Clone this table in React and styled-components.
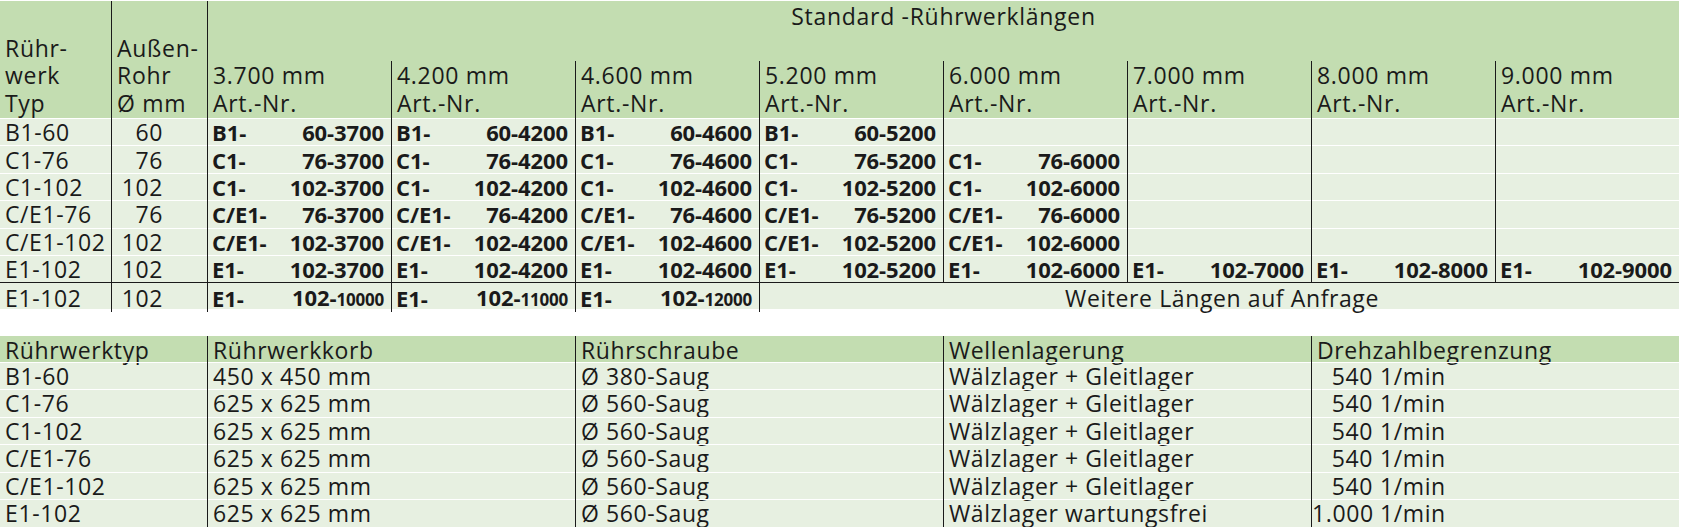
import React from 'react';
import styled, { createGlobalStyle } from 'styled-components';

const HEAD = '#c3ddb1';
const ROW = '#e7f0e1';
const INK = '#1a1a1a';
const TOP_COLS = '111px 96px repeat(8, 184px)';
const SPEC_COLS = '207px repeat(4, 368px)';

const GlobalStyle = createGlobalStyle`
  body {
    margin: 0;
    background: #fff;
    font-family: 'Open Sans', 'Noto Sans', sans-serif;
    color: ${INK};
  }
`;

const Page = styled.div`
  width: 1679px;
  padding-top: 1px;
`;

const HeadGrid = styled.div`
  display: grid;
  grid-template-columns: ${TOP_COLS};
  grid-template-rows: 60px 57px;
  background: ${HEAD};
`;

const HeadCell = styled.div`
  grid-row: ${(p) => p.$row || 'auto'};
  grid-column: ${(p) => p.$col || 'auto'};
  display: flex;
  flex-direction: column;
  justify-content: ${(p) => (p.$top ? 'flex-start' : 'flex-end')};
  align-items: ${(p) => (p.$center ? 'center' : 'flex-start')};
  padding: ${(p) => (p.$top ? '2px 0 0' : '0 0 1px 5px')};
  border-left: ${(p) => (p.$line ? `1px solid ${INK}` : 'none')};
  font-size: 23px;
  line-height: 27.5px;
  letter-spacing: 0.7px;
  white-space: nowrap;
`;

const Row = styled.div`
  display: grid;
  grid-template-columns: ${(p) => p.$cols};
  height: ${(p) => p.$h || '27.4px'};
  background: ${ROW};
  border-top: ${(p) => (p.$ruled ? `1px solid ${INK}` : 'none')};
  box-sizing: border-box;
`;

const Cell = styled.div`
  grid-column: ${(p) => p.$span || 'auto'};
  display: flex;
  align-items: center;
  justify-content: ${(p) => p.$justify || 'flex-start'};
  padding: ${(p) => p.$pad || '2px 0 0 5px'};
  border-left: ${(p) => (p.$line ? `1px solid ${INK}` : 'none')};
  box-shadow: ${(p) => (p.$sep === false ? 'none' : 'inset 0 1px 0 #fff')};
  font-size: 23px;
  line-height: 25px;
  letter-spacing: 0.6px;
  white-space: nowrap;
`;

const ArtCell = styled(Cell)`
  justify-content: space-between;
  padding: 2px 7px 0 4px;
  font-size: 22px;
  font-weight: 700;
  letter-spacing: -0.1px;
`;

const Small = styled.span`
  font-size: 17px;
  letter-spacing: -0.2px;
`;

const Gap = styled.div`
  height: 26.4px;
`;

const SpecHead = styled(Row)`
  background: ${HEAD};
  height: 26px;
`;

const Rpm = styled.span`
  display: inline-block;
  width: 61px;
  text-align: right;
  margin-right: 7px;
`;

const lengths = ['3.700', '4.200', '4.600', '5.200', '6.000', '7.000', '8.000', '9.000'];

const rows = [
  { typ: 'B1-60', d: '60', pre: 'B1-', n: 4 },
  { typ: 'C1-76', d: '76', pre: 'C1-', n: 5 },
  { typ: 'C1-102', d: '102', pre: 'C1-', n: 5 },
  { typ: 'C/E1-76', d: '76', pre: 'C/E1-', n: 5 },
  { typ: 'C/E1-102', d: '102', pre: 'C/E1-', n: 5 },
  { typ: 'E1-102', d: '102', pre: 'E1-', n: 8 },
];

const specs = [
  ['B1-60', '450 x 450 mm', 'Ø 380-Saug', 'Wälzlager + Gleitlager', '540'],
  ['C1-76', '625 x 625 mm', 'Ø 560-Saug', 'Wälzlager + Gleitlager', '540'],
  ['C1-102', '625 x 625 mm', 'Ø 560-Saug', 'Wälzlager + Gleitlager', '540'],
  ['C/E1-76', '625 x 625 mm', 'Ø 560-Saug', 'Wälzlager + Gleitlager', '540'],
  ['C/E1-102', '625 x 625 mm', 'Ø 560-Saug', 'Wälzlager + Gleitlager', '540'],
  ['E1-102', '625 x 625 mm', 'Ø 560-Saug', 'Wälzlager wartungsfrei', '1.000'],
];

const App = () => (
  <Page>
    <GlobalStyle />

    <HeadGrid>
      <HeadCell $row="1 / 3">
        <span>Rühr-</span>
        <span>werk</span>
        <span>Typ</span>
      </HeadCell>
      <HeadCell $row="1 / 3" $line>
        <span>Außen-</span>
        <span>Rohr</span>
        <span>Ø mm</span>
      </HeadCell>
      <HeadCell $row="1" $col="3 / -1" $line $top $center>
        Standard -Rührwerklängen
      </HeadCell>
      {lengths.map((l) => (
        <HeadCell key={l} $row="2" $line>
          <span>{l} mm</span>
          <span>Art.-Nr.</span>
        </HeadCell>
      ))}
    </HeadGrid>

    {rows.map((r) => (
      <Row key={r.typ} $cols={TOP_COLS}>
        <Cell>{r.typ}</Cell>
        <Cell $line $justify="flex-end" $pad="2px 44px 0 0">{r.d}</Cell>
        {lengths.map((l, i) =>
          i < r.n ? (
            <ArtCell key={l} $line>
              <span>{r.pre}</span>
              <span>{r.d}-{l.replace('.', '')}</span>
            </ArtCell>
          ) : (
            <Cell key={l} $line />
          )
        )}
      </Row>
    ))}

    <Row $cols={TOP_COLS} $ruled $h="27px">
      <Cell $sep={false}>E1-102</Cell>
      <Cell $sep={false} $line $justify="flex-end" $pad="2px 44px 0 0">102</Cell>
      {['10000', '11000', '12000'].map((n) => (
        <ArtCell key={n} $sep={false} $line>
          <span>E1-</span>
          <span>102-<Small>{n}</Small></span>
        </ArtCell>
      ))}
      <Cell $sep={false} $line $span="6 / -1" $justify="center">
        Weitere Längen auf Anfrage
      </Cell>
    </Row>

    <Gap />

    <SpecHead $cols={SPEC_COLS}>
      <Cell $sep={false}>Rührwerktyp</Cell>
      <Cell $sep={false} $line>Rührwerkkorb</Cell>
      <Cell $sep={false} $line>Rührschraube</Cell>
      <Cell $sep={false} $line>Wellenlagerung</Cell>
      <Cell $sep={false} $line>Drehzahlbegrenzung</Cell>
    </SpecHead>
    {specs.map((s) => (
      <Row key={s[0]} $cols={SPEC_COLS} $h="27.5px">
        <Cell>{s[0]}</Cell>
        <Cell $line>{s[1]}</Cell>
        <Cell $line>{s[2]}</Cell>
        <Cell $line>{s[3]}</Cell>
        <Cell $line $pad="2px 0 0 0">
          <Rpm>{s[4]}</Rpm>1/min
        </Cell>
      </Row>
    ))}
  </Page>
);

export default App;
